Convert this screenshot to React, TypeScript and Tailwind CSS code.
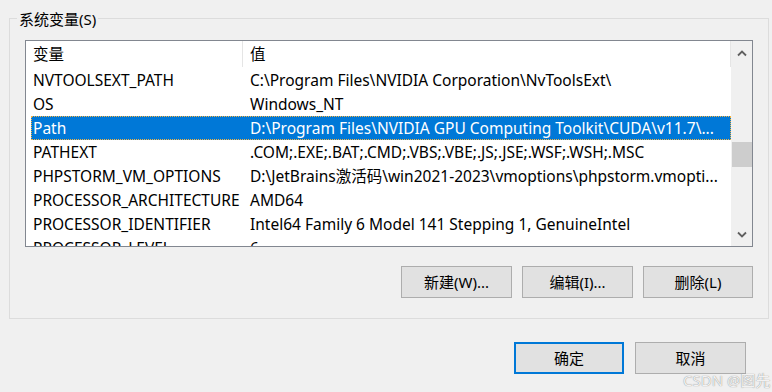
const rows: [string, string][] = [
  ["NVTOOLSEXT_PATH", "C:\\Program Files\\NVIDIA Corporation\\NvToolsExt\\"],
  ["OS", "Windows_NT"],
  ["Path", "D:\\Program Files\\NVIDIA GPU Computing Toolkit\\CUDA\\v11.7\\..."],
  ["PATHEXT", ".COM;.EXE;.BAT;.CMD;.VBS;.VBE;.JS;.JSE;.WSF;.WSH;.MSC"],
  ["PHPSTORM_VM_OPTIONS", "D:\\JetBrains激活码\\win2021-2023\\vmoptions\\phpstorm.vmopti..."],
  ["PROCESSOR_ARCHITECTURE", "AMD64"],
  ["PROCESSOR_IDENTIFIER", "Intel64 Family 6 Model 141 Stepping 1, GenuineIntel"],
  ["PROCESSOR_LEVEL", "6"],
];

const font = { fontFamily: '"Noto Sans", "Noto Sans CJK SC", sans-serif' };

export default function App() {
  return (
    <div
      className="w-[772px] h-[392px] bg-[#f0f0f0] relative overflow-hidden text-[15.5px] text-black leading-[20px]"
      style={font}
    >
      {/* group box */}
      <div className="pl-[9px] pt-[18px] w-[772px]">
        <div className="relative w-[760px] h-[301px] border border-[#dcdcdc] pl-[15px] pt-[21px]">
          <span className="absolute left-[7px] top-[-10px] px-[2px] bg-[#f0f0f0] text-[15px] leading-[20px]">
            系统变量(S)
          </span>

          {/* list view */}
          <div className="w-[728px] h-[207px] border border-[#828790] bg-white flex overflow-hidden">
            <div className="w-[705px] flex flex-col">
              <div className="h-[26px] flex shrink-0 border-r border-[#e5e5e5]">
                <div className="w-[217px] pl-[7px] flex items-center border-r border-[#e5e5e5]">变量</div>
                <div className="flex-1 pl-[7px] flex items-center">值</div>
              </div>
              <div className="h-[1px] shrink-0" />
              {rows.map(([name, value]) => {
                const sel = name === "Path";
                return (
                  <div key={name} className="h-[24px] shrink-0 pl-[5px] flex">
                    <div
                      className={
                        sel
                          ? "flex-1 flex items-center bg-[#0078d7] text-white outline-1 outline-dotted outline-[#f5b342] -outline-offset-1"
                          : "flex-1 flex items-center"
                      }
                    >
                      <div className="w-[212px] pl-[2px] whitespace-nowrap">{name}</div>
                      <div className="flex-1 pl-[7px] whitespace-nowrap">{value}</div>
                    </div>
                  </div>
                );
              })}
            </div>

            {/* scrollbar */}
            <div className="w-[21px] bg-[#f0f0f0] flex flex-col pl-[1px]">
              <div className="h-[24px] w-full flex items-center justify-center">
                <svg width="10" height="7" viewBox="0 0 10 7">
                  <path d="M1 5.5 L5 1.5 L9 5.5" fill="none" stroke="#606060" strokeWidth="1.8" />
                </svg>
              </div>
              <div className="h-[77px]" />
              <div className="h-[25px] w-full bg-[#cdcdcd]" />
              <div className="flex-1" />
              <div className="h-[24px] w-full flex items-center justify-center">
                <svg width="10" height="7" viewBox="0 0 10 7">
                  <path d="M1 1.5 L5 5.5 L9 1.5" fill="none" stroke="#606060" strokeWidth="1.8" />
                </svg>
              </div>
            </div>
          </div>

          {/* list buttons */}
          <div className="flex justify-end gap-[10px] mt-[19px] w-[728px]">
            <Btn label="新建(W)..." />
            <Btn label="编辑(I)..." />
            <Btn label="删除(L)" w="w-[110px]" />
          </div>
        </div>
      </div>

      {/* dialog buttons */}
      <div className="flex justify-end gap-[11px] pr-[26px] mt-[23px]">
        <button className="w-[110px] h-[32px] bg-[#e1e1e1] border-2 border-[#0078d7] flex items-center justify-center text-[15px]">
          确定
        </button>
        <Btn label="取消" />
      </div>

      <span className="absolute left-[683px] top-[370px] text-[15px] text-[#f2f2f2] leading-[20px] [text-shadow:0_0_1px_#707070]">
        CSDN @图先
      </span>
    </div>
  );
}

function Btn({ label, w = "w-[111px]" }: { label: string; w?: string }) {
  return (
    <button
      className={`${w} h-[32px] bg-[#e1e1e1] border border-[#adadad] flex items-center justify-center text-[15px]`}
    >
      {label}
    </button>
  );
}
